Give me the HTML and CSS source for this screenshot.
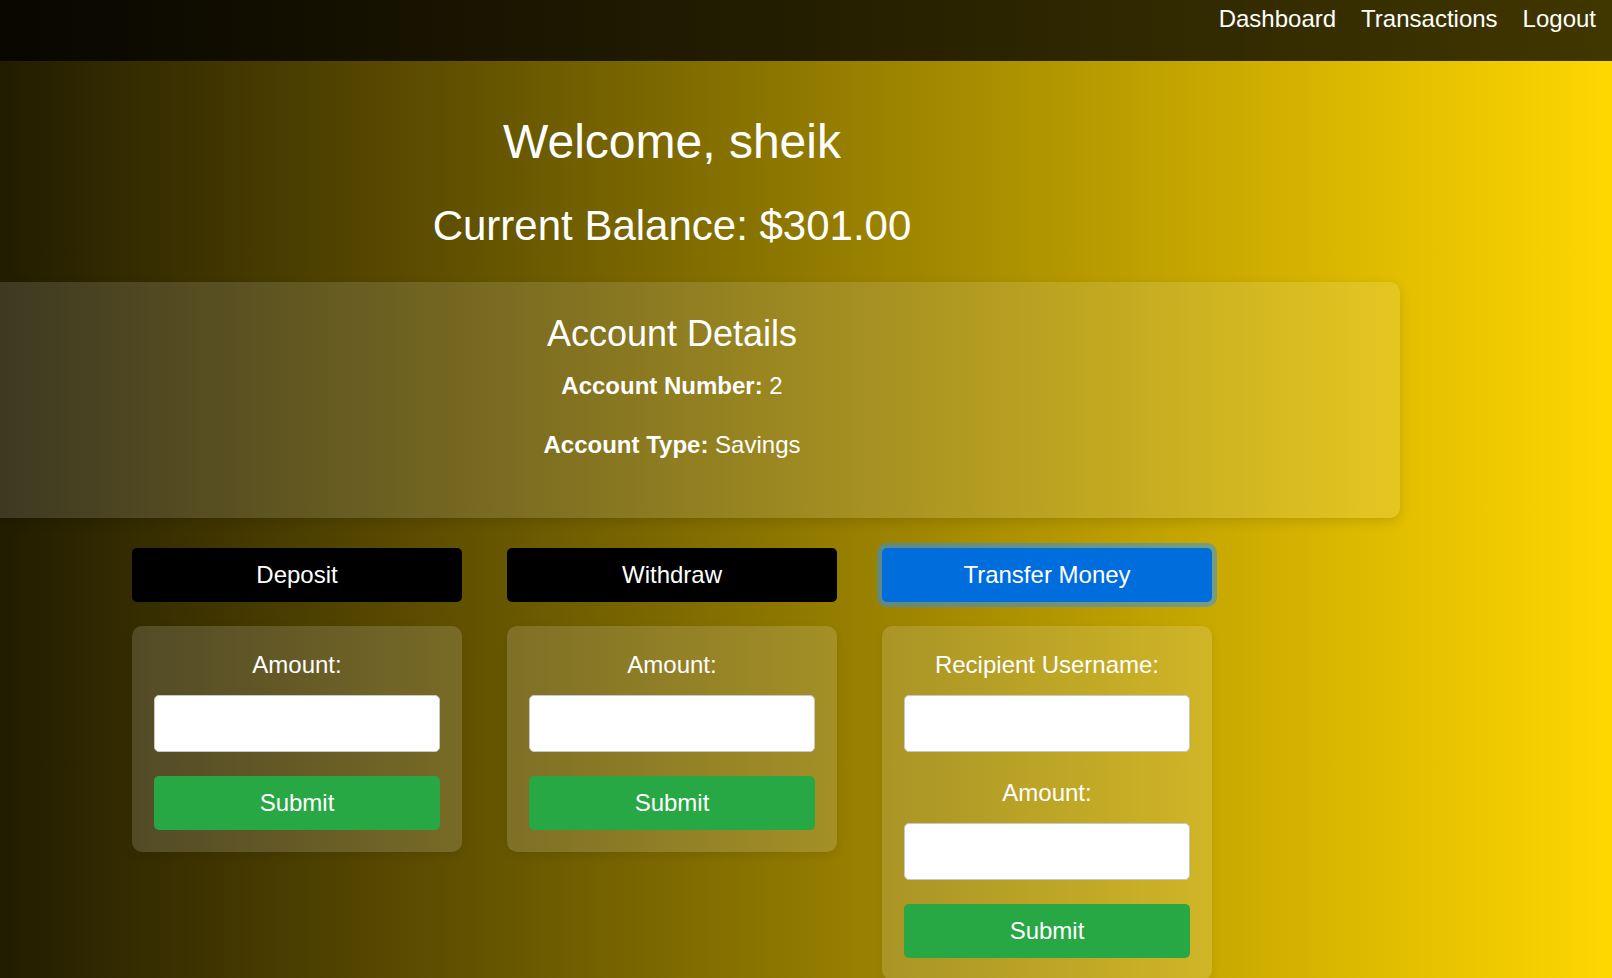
FILE: index.html
```html
<!DOCTYPE html>
<html lang="en">
<head>
<meta charset="utf-8">
<title>Dashboard</title>
<link rel="stylesheet" href="styles.css">
</head>
<body>
<nav class="navbar">
  <a class="nav-link" href="#">Dashboard</a>
  <a class="nav-link" href="#">Transactions</a>
  <a class="nav-link" href="#">Logout</a>
</nav>
<main class="main">
  <h1 class="welcome">Welcome, sheik</h1>
  <h2 class="balance">Current Balance: $301.00</h2>
  <section class="account-card">
    <h3 class="account-title">Account Details</h3>
    <p class="account-row first"><strong>Account Number:</strong> 2</p>
    <p class="account-row second"><strong>Account Type:</strong> Savings</p>
  </section>
  <div class="actions">
    <div class="action-col">
      <button class="tab-btn">Deposit</button>
      <form class="form-card">
        <label class="field-label">Amount:</label>
        <input class="field-input" type="text">
        <button class="submit-btn" type="button">Submit</button>
      </form>
    </div>
    <div class="action-col">
      <button class="tab-btn">Withdraw</button>
      <form class="form-card">
        <label class="field-label">Amount:</label>
        <input class="field-input" type="text">
        <button class="submit-btn" type="button">Submit</button>
      </form>
    </div>
    <div class="action-col">
      <button class="tab-btn active">Transfer Money</button>
      <form class="form-card">
        <label class="field-label">Recipient Username:</label>
        <input class="field-input" type="text">
        <label class="field-label">Amount:</label>
        <input class="field-input" type="text">
        <button class="submit-btn" type="button">Submit</button>
      </form>
    </div>
  </div>
</main>
</body>
</html>
```
FILE: styles.css
```css
* { box-sizing: border-box; }
html, body { margin: 0; padding: 0; }
body {
  font-family: "Liberation Sans", Arial, sans-serif;
  font-size: 24px;
  color: #fff;
  min-height: 978px;
  background: linear-gradient(to right, #221c00 0%, #ffd700 100%);
  overflow: hidden;
}
.navbar {
  height: 61px;
  display: flex;
  justify-content: flex-end;
  align-items: flex-start;
  gap: 25px;
  padding: 5px 16px 0 0;
  background: rgba(0, 0, 0, 0.75);
}
.nav-link {
  color: #fff;
  text-decoration: none;
  font-size: 24px;
  line-height: 28px;
}
.main {
  width: 1344px;
  text-align: center;
}
.welcome {
  margin: 53px 0 0;
  font-size: 48px;
  font-weight: normal;
  line-height: 55px;
}
.balance {
  margin: 33px 0 0;
  font-size: 42px;
  font-weight: normal;
  line-height: 48px;
}
.account-card {
  margin: 32px -56px 0;
  height: 236px;
  padding: 31px 0 0;
  background: rgba(255, 255, 255, 0.13);
  border-radius: 10px;
  box-shadow: 0 4px 12px rgba(0, 0, 0, 0.12);
}
.account-title {
  margin: 0;
  font-size: 36px;
  font-weight: normal;
  line-height: 41px;
}
.account-row {
  margin: 0;
  line-height: 28px;
}
.account-row.first { margin-top: 18px; }
.account-row.second { margin-top: 31px; }
.actions {
  width: 1080px;
  margin: 30px auto 0;
  display: grid;
  grid-template-columns: repeat(3, 330px);
  column-gap: 45px;
  align-items: start;
}
.action-col {
  display: flex;
  flex-direction: column;
  gap: 24px;
}
.tab-btn {
  height: 54px;
  border: none;
  border-radius: 5px;
  background: #000;
  color: #fff;
  font-family: "Liberation Sans", Arial, sans-serif;
  font-size: 24px;
  padding: 0;
}
.tab-btn.active {
  background: #006ddc;
  box-shadow: 0 0 0 5px rgba(38, 143, 255, 0.5);
}
.form-card {
  margin: 0;
  padding: 22px 22px 22px;
  background: rgba(255, 255, 255, 0.15);
  border-radius: 10px;
  box-shadow: 0 4px 10px rgba(0, 0, 0, 0.08);
  display: flex;
  flex-direction: column;
}
.field-label {
  display: block;
  margin: 5px 0 18px;
  line-height: 24px;
  font-size: 24px;
}
.field-input {
  width: 100%;
  height: 57px;
  margin: 0 0 24px;
  border: 1px solid #c8c8c8;
  border-radius: 5px;
  background: #fff;
  font-size: 24px;
}
.submit-btn {
  width: 100%;
  height: 54px;
  border: none;
  border-radius: 5px;
  background: #28a745;
  color: #fff;
  font-family: "Liberation Sans", Arial, sans-serif;
  font-size: 24px;
  padding: 0;
}
```
